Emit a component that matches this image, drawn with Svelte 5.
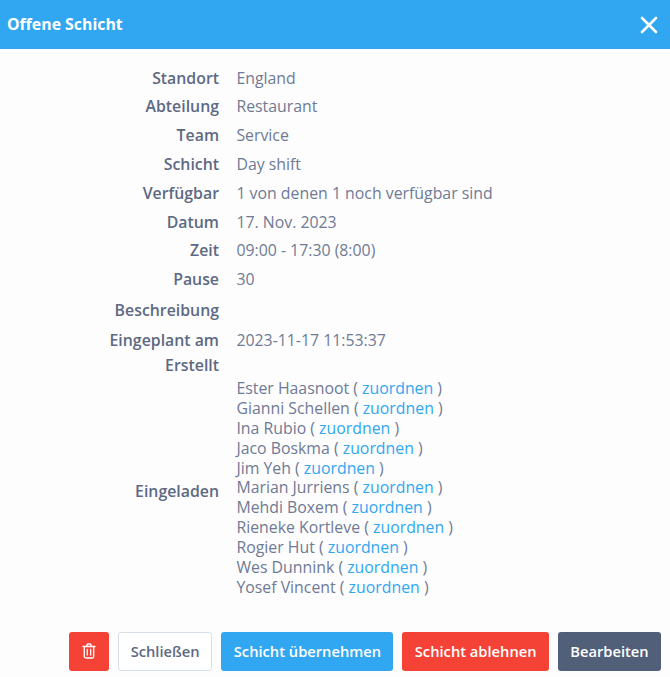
<script>
  const rows = [
    ['Standort', 'England'],
    ['Abteilung', 'Restaurant'],
    ['Team', 'Service'],
    ['Schicht', 'Day shift'],
    ['Verfügbar', '1 von denen 1 noch verfügbar sind'],
    ['Datum', '17. Nov. 2023'],
    ['Zeit', '09:00 - 17:30 (8:00)'],
    ['Pause', '30']
  ];
  const invited = ['Ester Haasnoot', 'Gianni Schellen', 'Ina Rubio', 'Jaco Boskma', 'Jim Yeh', 'Marian Jurriens', 'Mehdi Boxem', 'Rieneke Kortleve', 'Rogier Hut', 'Wes Dunnink', 'Yosef Vincent'];
</script>

<div class="modal">
  <header class="head">
    <h1>Offene Schicht</h1>
    <svg class="close" width="18" height="18" viewBox="0 0 18 18" aria-hidden="true"><path d="M2 2l14 14M16 2L2 16" stroke="#fff" stroke-width="2.6" stroke-linecap="round"/></svg>
  </header>
  <main class="body">
    <dl class="grid">
      {#each rows as r}
        <dt class="row">{r[0]}</dt><dd class="row">{r[1]}</dd>
      {/each}
      <dt class="row desc">Beschreibung</dt><dd class="row desc"></dd>
      <dt class="row plan">Eingeplant am</dt><dd class="row plan">2023-11-17 11:53:37</dd>
      <dt class="row made">Erstellt</dt><dd class="row made"></dd>
      <dt class="inv">Eingeladen</dt>
      <dd class="inv list">
        {#each invited as n}
          <div>{n} ( <a href="#z">zuordnen</a> )</div>
        {/each}
      </dd>
    </dl>
  </main>
  <footer class="foot">
    <button class="btn red icon" aria-label="Löschen">
      <svg width="14" height="16" viewBox="0 0 14 16" fill="none" stroke="#fff" stroke-width="1.3" stroke-linecap="round" stroke-linejoin="round"><path d="M1 3.5h12M5 3.5V2a1 1 0 0 1 1-1h2a1 1 0 0 1 1 1v1.5M2.3 3.5v10A1.5 1.5 0 0 0 3.8 15h6.4a1.5 1.5 0 0 0 1.5-1.5v-10M5.3 6.5v5.5M8.7 6.5v5.5"/></svg>
    </button>
    <button class="btn ghost">Schließen</button>
    <button class="btn blue">Schicht übernehmen</button>
    <button class="btn red">Schicht ablehnen</button>
    <button class="btn slate">Bearbeiten</button>
  </footer>
</div>

<style>
  :global(body) { margin: 0; background: #fdfdfe; }
  .modal { width: 670px; height: 677px; font-family: "Open Sans", sans-serif; font-size: 15.85px; color: #6f7a94; display: flex; flex-direction: column; overflow: hidden; }
  .head { height: 49px; flex: none; background: #31a7f1; display: flex; align-items: center; justify-content: space-between; padding: 0 12px 0 7px; }
  h1 { margin: 0; font-size: 15.85px; font-weight: 700; color: #fff; transform: translateY(-1px); }
  .body { flex: 1; padding-top: 14.6px; }
  .grid { margin: 0; display: grid; grid-template-columns: 219px 1fr; column-gap: 17.4px; }
  dt { margin: 0; text-align: right; font-weight: 600; color: #5d6982; }
  dd { margin: 0; }
  .row { height: 28.8px; line-height: 28.8px; }
  .desc { height: 30px; line-height: 30px; margin-top: 0.6px; }
  .plan { height: 30px; line-height: 30px; }
  .made { height: 20px; line-height: 20px; }
  .inv { align-self: center; }
  .list { line-height: 19.9px; padding: 4.4px 0 9.6px; }
  a { color: #31a7f1; text-decoration: none; }
  .foot { flex: none; display: flex; justify-content: flex-end; gap: 9px; padding: 0 9px 6px 0; }
  .btn { height: 39px; box-sizing: border-box; padding: 0 11.4px 2px; border: 1px solid transparent; border-radius: 3px; font: 600 14.7px "Open Sans", sans-serif; color: #fff; display: flex; align-items: center; justify-content: center; }
  .icon { width: 40px; padding: 0 0 2px; }
  .red { background: #f44336; }
  .blue { background: #31a7f1; }
  .slate { background: #525f78; }
  .btn.ghost { background: #fff; color: #5d6982; border-color: #d9dfe9; padding: 0 11.8px 2px; }
</style>
